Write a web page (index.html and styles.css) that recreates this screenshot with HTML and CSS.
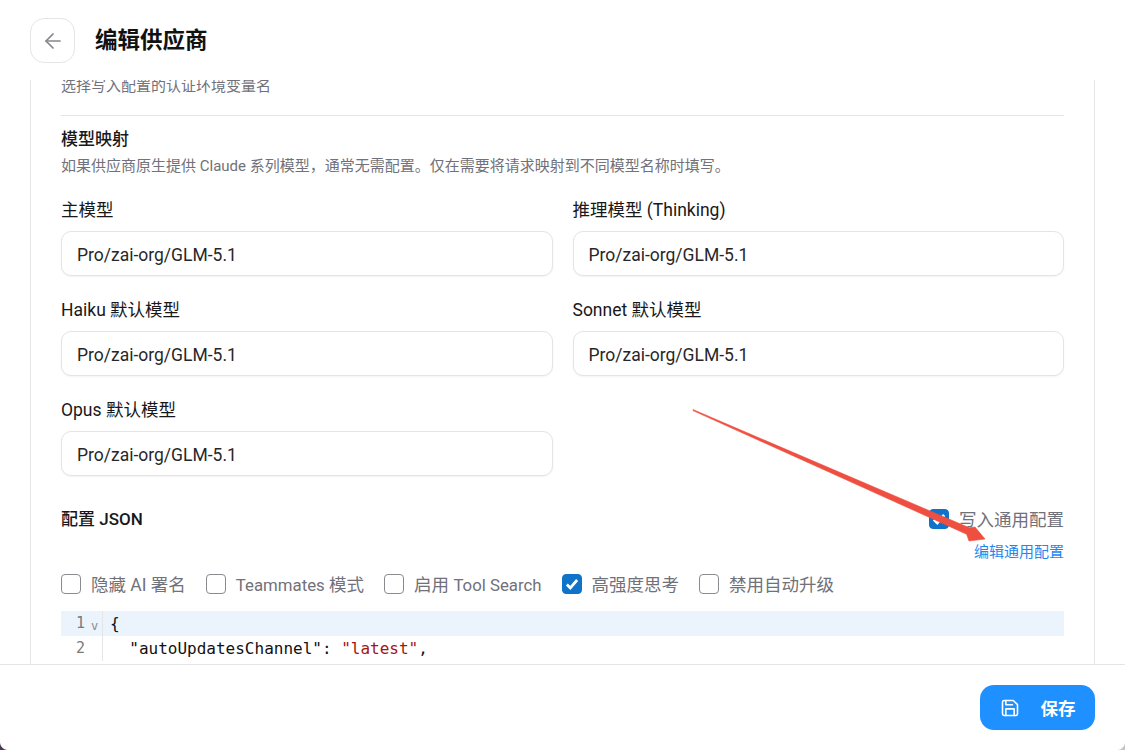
FILE: index.html
```html
<!DOCTYPE html>
<html lang="zh-CN">
<head>
<meta charset="utf-8">
<title>编辑供应商</title>
<link rel="stylesheet" href="styles.css">
</head>
<body>
<div class="app">
  <header class="topbar">
    <button class="back" type="button" aria-label="返回">
      <svg width="24" height="24" viewBox="0 0 24 24" fill="none" stroke="#85858c" stroke-width="1.7" stroke-linecap="round" stroke-linejoin="round"><path d="M19 12H5"/><path d="M12 19l-7-7 7-7"/></svg>
    </button>
    <h1 class="title">编辑供应商</h1>
  </header>
  <main class="scroller">
    <section class="card">
      <p class="hint first">选择写入配置的认证环境变量名</p>
      <hr class="rule">
      <h2 class="sub">模型映射</h2>
      <p class="hint lead">如果供应商原生提供 Claude 系列模型，通常无需配置。仅在需要将请求映射到不同模型名称时填写。</p>
      <div class="grid">
        <div class="field"><label class="label">主模型</label><div class="input">Pro/zai-org/GLM-5.1</div></div>
        <div class="field"><label class="label">推理模型 (Thinking)</label><div class="input">Pro/zai-org/GLM-5.1</div></div>
        <div class="field"><label class="label">Haiku 默认模型</label><div class="input">Pro/zai-org/GLM-5.1</div></div>
        <div class="field"><label class="label">Sonnet 默认模型</label><div class="input">Pro/zai-org/GLM-5.1</div></div>
        <div class="field"><label class="label">Opus 默认模型</label><div class="input">Pro/zai-org/GLM-5.1</div></div>
      </div>
      <div class="json-head">
        <h2 class="sub">配置 JSON</h2>
        <div class="json-side">
          <label class="check"><span class="box on"><svg width="16" height="16" viewBox="0 0 14 14" fill="none" stroke="#fff" stroke-width="2.4"><path d="M2.5 7.5l3 3 6-7"/></svg></span><span>写入通用配置</span></label>
          <a class="link">编辑通用配置</a>
        </div>
      </div>
      <div class="options">
        <label class="check"><span class="box"></span><span>隐藏 AI 署名</span></label>
        <label class="check"><span class="box"></span><span><span class="latin">Teammates</span> 模式</span></label>
        <label class="check"><span class="box"></span><span>启用 <span class="latin">Tool Search</span></span></label>
        <label class="check"><span class="box on"><svg width="16" height="16" viewBox="0 0 14 14" fill="none" stroke="#fff" stroke-width="2.4"><path d="M2.5 7.5l3 3 6-7"/></svg></span><span>高强度思考</span></label>
        <label class="check"><span class="box"></span><span>禁用自动升级</span></label>
      </div>
      <div class="code">
        <div class="line active"><span class="num">1</span><span class="fold">v</span><span class="src">{</span></div>
        <div class="line"><span class="num">2</span><span class="fold"></span><span class="src">  "autoUpdatesChannel": <span class="str">"latest"</span>,</span></div>
      </div>
    </section>
  </main>
  <footer class="footer">
    <button class="save" type="button">
      <svg width="20" height="20" viewBox="0 0 24 24" fill="none" stroke="#fff" stroke-width="1.9" stroke-linecap="round" stroke-linejoin="round"><path d="M19 21H5a2 2 0 0 1-2-2V5a2 2 0 0 1 2-2h11l5 5v11a2 2 0 0 1-2 2z"/><path d="M17 21v-8H7v8"/><path d="M7 3v5h8"/></svg>
      保存
    </button>
  </footer>
  <svg class="arrow" width="1125" height="750" viewBox="0 0 1125 750"><path d="M693 409.6L969.4 527.8L975 527L985 539L969 541L966.6 534.2L693 410.6Z" fill="#ee4f40" stroke="#ee4f40" stroke-width=".6"/></svg>
</div>
</body>
</html>
```
FILE: styles.css
```css
* { box-sizing: border-box; }
html, body { margin: 0; height: 100%; background: #fff; }
body { font-family: Roboto, "Noto Sans CJK SC", sans-serif; color: #18181b; overflow: hidden; }
.app { position: relative; width: 1125px; height: 750px; display: flex; flex-direction: column; background: #fff; }
.app::before, .app::after { content: ""; position: absolute; bottom: 0; width: 8px; height: 8px; z-index: 2; }
.app::before { left: 0; background: radial-gradient(circle at top right, transparent 7.5px, #4a3a55 8.5px); }
.app::after { right: 0; background: radial-gradient(circle at top left, transparent 7.5px, #c4c4c4 8.5px); }
.topbar { height: 80px; flex: none; display: flex; align-items: center; padding: 0 0 0 30px; gap: 20px; }
.back { width: 45px; height: 45px; margin-top: 1px; display: flex; align-items: center; justify-content: center; padding: 0; background: #fff; border: 1px solid #e5e5e7; border-radius: 14px; }
.title { margin: 0; font-size: 22.5px; font-weight: 700; line-height: 30px; color: #111; }
.scroller { flex: 1; min-height: 0; overflow: hidden; padding: 0 30px; }
.card { margin-top: -10px; height: 700px; border: 1px solid #e5e5e7; padding: 0 30px; }
.hint { margin: 0; font-size: 15px; line-height: 20px; color: #71717a; }
.hint.first { padding-top: 5px; }
.hint.lead { margin-top: 6px; }
.rule { border: 0; border-top: 1px solid #e5e5e7; margin: 19px 0 12px; }
.sub { margin: 0; font-size: 17px; font-weight: 500; line-height: 22px; color: #18181b; }
.grid { margin-top: 22px; display: grid; grid-template-columns: 1fr 1fr; column-gap: 20px; row-gap: 22px; }
.label { display: block; padding-top: 1px; font-size: 17.5px; line-height: 22px; color: #18181b; margin-bottom: 10px; }
.input { height: 45px; padding: 2px 15px 0; display: flex; align-items: center; font-size: 17.5px; color: #27272a; border: 1px solid #e4e4e7; border-radius: 10px; box-shadow: 0 1px 2px rgba(0,0,0,.05); background: #fff; }
.json-head { margin-top: 32px; display: flex; justify-content: space-between; align-items: flex-start; }
.json-side { display: flex; flex-direction: column; align-items: flex-end; gap: 10px; }
.check { display: inline-flex; align-items: flex-start; gap: 10px; height: 24px; font-size: 17.5px; line-height: 24px; color: #71717a; white-space: nowrap; }
.latin { font-size: 16.8px; }
.box { width: 20px; height: 20px; margin-top: 1px; flex: none; display: flex; align-items: center; justify-content: center; border: 1px solid #8a8a8f; border-radius: 4px; background: #fff; }
.box.on { background: #0f73c9; border-color: #0f73c9; }
.link { font-size: 15px; line-height: 20px; color: #1e88f0; }
.options { margin-top: 11px; display: flex; gap: 20px; }
.code { margin-top: 14px; font-family: "DejaVu Sans Mono", "Liberation Mono", monospace; font-size: 16px; line-height: 25px; }
.line { display: flex; height: 25px; white-space: pre; }
.line.active { background: #ebf4fd; }
.num { width: 24px; text-align: right; color: #7a7a7a; font-size: 15px; }
.fold { width: 18px; padding: 3px 0 0 6px; color: #8a8a8a; font-size: 12px; border-right: 1px solid #e5e5e7; }
.src { padding-left: 7px; color: #111; }
.str { color: #a31515; }
.footer { height: 86px; flex: none; border-top: 1px solid #e5e5e7; display: flex; justify-content: flex-end; align-items: flex-start; padding: 20px 30px 0 0; background: #fff; }
.save { width: 115px; height: 45px; display: flex; align-items: center; justify-content: center; gap: 21px; border: 0; border-radius: 14px; background: #1e90ff; color: #fff; font-family: inherit; font-size: 17.5px; font-weight: 700; }
.arrow { position: absolute; left: 0; top: 0; pointer-events: none; }
```
